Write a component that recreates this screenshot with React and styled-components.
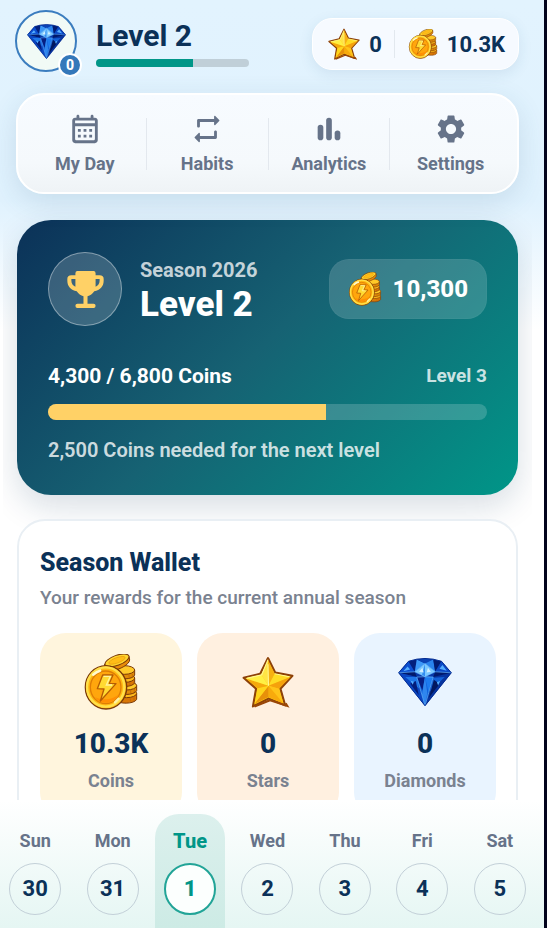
import React from "react";
import styled, { createGlobalStyle, css } from "styled-components";
import { MdSettings } from "react-icons/md";

const navy = "#0b3158";
const teal = "#009688";
const slate = "#667389";
const gray = "#7a8290";

const GlobalStyle = createGlobalStyle`
  * { box-sizing: border-box; }
  body { margin: 0; font-family: Roboto, "Open Sans", sans-serif; color: ${navy}; }
  button { font: inherit; color: inherit; background: none; border: 0; padding: 0; cursor: pointer; }
  h1, h2, p { margin: 0; }
  svg { display: block; flex: none; }
`;

const Page = styled.div`
  height: 100vh;
  display: flex;
  flex-direction: column;
  overflow: hidden;
  border-right: 3px solid #02031c;
  background: linear-gradient(#e2f3fe 0, #e0f2fe 200px, #ffffff 330px);
`;

const TopBar = styled.header`
  display: flex;
  align-items: flex-start;
  justify-content: space-between;
  padding: 10px 25px 0 15px;
  height: 78px;
  flex: none;
`;

const Profile = styled.div`
  display: flex;
  align-items: center;
  gap: 19px;
`;

const Avatar = styled.button`
  position: relative;
  width: 62px;
  height: 62px;
  border: 2px solid #3b7dbf;
  border-radius: 50%;
  background: #f1faf6;
  display: grid;
  place-items: center;
`;

const AvatarBadge = styled.span`
  position: absolute;
  right: -7px;
  bottom: -7px;
  width: 24px;
  height: 24px;
  border-radius: 50%;
  border: 2px solid #fff;
  background: #3478ba;
  color: #fff;
  font-size: 14px;
  font-weight: 800;
  line-height: 20px;
  text-align: center;
`;

const LevelBlock = styled.div`
  width: 153px;
  display: grid;
  gap: 5px;
  padding-top: 3px;
`;

const LevelTitle = styled.h1`
  font-size: 30px;
  line-height: 36px;
  font-weight: 700;
`;

const Track = styled.div`
  height: ${(p) => p.$height}px;
  border-radius: 8px;
  background: ${(p) => p.$color};
  overflow: hidden;
`;

const Fill = styled.div`
  height: 100%;
  background: ${(p) => p.$color};
`;

const Balance = styled.div`
  display: flex;
  align-items: center;
  height: 52px;
  margin-top: 8px;
  padding: 0 13px 0 15px;
  border-radius: 20px;
  border: 1px solid #fff;
  background: #f6faff;
  box-shadow: 0 4px 14px rgba(40, 90, 130, 0.1);
  font-size: 22px;
  font-weight: 700;
  gap: 9px;
`;

const BalanceDivider = styled.span`
  width: 1px;
  height: 28px;
  background: #e2e8ee;
  margin: 0 4px 0 3px;
`;

const NavBar = styled.nav`
  position: relative;
  flex: none;
  margin: 15px 25px 0 16px;
  height: 101px;
  padding: 0 6px;
  display: grid;
  grid-template-columns: repeat(4, 1fr);
  align-items: center;
  border: 2px solid #fff;
  border-radius: 28px;
  background: linear-gradient(#f7fbff, #f5f9fc 70%, #eff3f6);
  box-shadow: 0 8px 28px rgba(40, 90, 120, 0.14);
`;

const NavItem = styled.button`
  height: 52px;
  display: flex;
  flex-direction: column;
  align-items: center;
  justify-content: center;
  gap: 6px;
  color: ${slate};
  font-size: 18px;
  line-height: 24px;
  font-weight: 700;
  & + & { border-left: 1px solid #e3e8ee; }
`;

const Scroller = styled.main`
  flex: 1;
  min-height: 0;
  margin: 0 12px 0 3px;
  padding: 26px 14px 0;
  overflow: hidden;
  display: flex;
  flex-direction: column;
  gap: 24px;
`;

const Hero = styled.section`
  flex: none;
  border-radius: 34px;
  padding: 31px;
  height: 275px;
  color: #fff;
  background: linear-gradient(135deg, #0b3158, #166273 48%, #009688);
  box-shadow: 0 12px 32px rgba(11, 49, 88, 0.16);
`;

const HeroTop = styled.div`
  display: flex;
  align-items: center;
  gap: 18px;
`;

const TrophyDisc = styled.div`
  width: 74px;
  height: 74px;
  flex: none;
  border-radius: 50%;
  border: 1px solid rgba(255, 255, 255, 0.38);
  background: rgba(255, 255, 255, 0.18);
  color: #ffd166;
  display: grid;
  place-items: center;
`;

const HeroNames = styled.div`
  flex: 1;
  padding-top: 6px;
`;

const SeasonName = styled.p`
  font-size: 20px;
  line-height: 26px;
  font-weight: 700;
  color: rgba(255, 255, 255, 0.76);
`;

const HeroLevel = styled.h2`
  font-size: 35px;
  line-height: 44px;
  font-weight: 800;
`;

const HeroCoins = styled.div`
  display: flex;
  align-items: center;
  gap: 11px;
  height: 60px;
  padding: 0 18px;
  border: 1px solid rgba(255, 255, 255, 0.03);
  border-radius: 20px;
  background: rgba(255, 255, 255, 0.16);
  font-size: 24px;
  font-weight: 800;
`;

const ProgressLabels = styled.div`
  display: flex;
  justify-content: space-between;
  align-items: center;
  margin: 36px 0 15px;
  font-size: 21px;
  line-height: 26px;
  font-weight: 700;
`;

const NextLevel = styled.span`
  font-size: 19px;
  font-weight: 700;
  color: rgba(255, 255, 255, 0.8);
`;

const HeroNote = styled.p`
  margin-top: 17px;
  font-size: 20px;
  line-height: 26px;
  font-weight: 600;
  color: rgba(255, 255, 255, 0.8);
`;

const WalletCard = styled.section`
  flex: none;
  padding: 27px 20px 22px 21px;
  border: 2px solid #e9eff4;
  border-radius: 28px;
  background: #fff;
`;

const WalletTitle = styled.h2`
  font-size: 25px;
  line-height: 30px;
  font-weight: 800;
`;

const WalletText = styled.p`
  margin: 7px 0 22px;
  font-size: 19px;
  line-height: 26px;
  font-weight: 500;
  color: ${gray};
`;

const Tiles = styled.div`
  display: grid;
  grid-template-columns: repeat(3, 1fr);
  gap: 15px;
`;

const Tile = styled.div`
  display: flex;
  flex-direction: column;
  align-items: center;
  border-radius: 26px;
  padding: 20px 0 24px;
  background: ${(p) => p.$color};
`;

const TileIcon = styled.div`
  height: 58px;
  display: grid;
  place-items: center;
`;

const TileValue = styled.strong`
  margin-top: 16px;
  font-size: 28px;
  line-height: 34px;
  font-weight: 800;
`;

const TileLabel = styled.span`
  margin-top: 7px;
  font-size: 18px;
  line-height: 26px;
  font-weight: 700;
  color: ${gray};
`;

const WeekBar = styled.nav`
  flex: none;
  height: 128px;
  padding: 14px 9px 0 0;
  display: grid;
  grid-template-columns: repeat(7, 1fr);
  gap: 7px;
  background: linear-gradient(#ffffff, #e5f6f3);
`;

const DayNumber = styled.span`
  width: 52px;
  height: 52px;
  border-radius: 50%;
  border: 1px solid #c3d0d8;
  display: grid;
  place-items: center;
  color: ${navy};
  font-size: 22px;
  font-weight: 700;
`;

const Day = styled.button`
  display: flex;
  flex-direction: column;
  align-items: center;
  gap: 9px;
  padding-top: 14px;
  color: ${slate};
  font-size: 18px;
  line-height: 26px;
  font-weight: 700;
  border-radius: 24px 24px 0 0;
  ${(p) => p.$active && css`
    background: linear-gradient(#dcf0ed, #cdebe5);
    color: ${teal};
    font-size: 20px;
    font-weight: 800;
    ${DayNumber} {
      background: #fcfffe;
      border: 2px solid #22a497;
      color: ${teal};
      font-weight: 800;
    }
  `}
`;

function CalendarIcon() {
  return (
    <svg width="34" height="34" viewBox="0 0 24 24" fill="currentColor" aria-hidden="true">
      <path fillRule="evenodd" d="M19 4h-1V3c0-.55-.45-1-1-1s-1 .45-1 1v1H8V3c0-.55-.45-1-1-1s-1 .45-1 1v1H5c-1.1 0-2 .9-2 2v14c0 1.1.9 2 2 2h14c1.1 0 2-.9 2-2V6c0-1.1-.9-2-2-2zm0 15c0 .55-.45 1-1 1H6c-.55 0-1-.45-1-1v-9h14v9zm0-11H5V6h14v2z" />
      <path d="M7 12h2v2H7zM11 12h2v2h-2zM15 12h2v2h-2zM7 16h2v2H7zM11 16h2v2h-2zM15 16h2v2h-2z" />
    </svg>
  );
}

function RepeatIcon() {
  return (
    <svg width="34" height="34" viewBox="0 0 24 24" fill="currentColor" aria-hidden="true">
      <path d="M7 7h10v1.79c0 .45.54.67.85.35l2.79-2.79c.2-.2.2-.51 0-.71l-2.79-2.79c-.31-.31-.85-.09-.85.36V5H6c-.55 0-1 .45-1 1v4c0 .55.45 1 1 1s1-.45 1-1V7zm10 10H7v-1.79c0-.45-.54-.67-.85-.35l-2.79 2.79c-.2.2-.2.51 0 .71l2.79 2.79c.31.31.85.09.85-.36V19h11c.55 0 1-.45 1-1v-4c0-.55-.45-1-1-1s-1 .45-1 1v3z" />
    </svg>
  );
}

function BarsIcon() {
  return (
    <svg width="34" height="34" viewBox="0 0 24 24" fill="currentColor" aria-hidden="true">
      <rect x="4" y="9" width="4" height="11" rx="2" />
      <rect x="10" y="4" width="4" height="16" rx="2" />
      <rect x="16" y="13" width="4" height="7" rx="2" />
    </svg>
  );
}

function TrophyIcon() {
  return (
    <svg width="37" height="37" viewBox="-1 0 110 110" fill="currentColor" aria-hidden="true">
      <path d="M30 0h48q6 0 6 7v6h12q12 0 12 11v5c0 17-11 28-28 31-5 8-12 13-20 15v22h18q6 0 6 6.500t-6 6.500H30q-6 0-6-6.500t6-6.500h18V75c-8-2-15-7-20-15C11 57 0 46 0 29v-5q0-11 12-11h12V7q0-7 6-7zM24 24H12v5c0 9 5 15 12 18zM84 24v23c7-3 12-9 12-18v-5z" />
    </svg>
  );
}

function CoinsArt({ size }) {
  return (
    <svg width={size} height={size} viewBox="-6 -1 168 168" aria-hidden="true">
      <g stroke="#7a3a08" strokeWidth="3">
        <path d="M92 122v15c8 13 56 13 63-2v-17z" fill="#d97706" />
        <ellipse cx="124" cy="117" rx="31" ry="13" fill="#ffb91a" />
        <path d="M92 97v14c8 13 56 13 63-2V94z" fill="#e08a08" />
        <ellipse cx="124" cy="94" rx="31" ry="13" fill="#ffc928" />
        <path d="M88 73v14c8 13 56 13 61-2V71z" fill="#d97706" />
        <ellipse cx="119" cy="71" rx="30" ry="13" fill="#ffb91a" />
        <path d="M88 50v14c8 13 56 13 61-2V47z" fill="#e08a08" />
        <ellipse cx="118" cy="47" rx="31" ry="13" fill="#ffc928" />
        <path d="M59 29c-2 12 4 22 24 19 22-2 50-18 51-31l-2-11z" fill="#e88c08" />
        <ellipse cx="96" cy="18" rx="38" ry="15" transform="rotate(-20 96 18)" fill="#ffd52e" />
      </g>
      <ellipse cx="96" cy="18" rx="26" ry="8" transform="rotate(-20 96 18)" fill="#ffbd17" stroke="#e89a0c" strokeWidth="2" />
      <g stroke="#b96306" strokeWidth="2">
        <path d="M132 61v9M142 59v9M135 85v9M146 82v9M137 107v9M148 104v9M136 132v9M147 129v9" />
      </g>
      <ellipse cx="63" cy="99" rx="62" ry="65" fill="#ffb812" stroke="#7a3a08" strokeWidth="4" />
      <ellipse cx="62" cy="98" rx="56" ry="59" fill="none" stroke="#ffe04a" strokeWidth="7" />
      <ellipse cx="62" cy="99" rx="46" ry="49" fill="#ffa60d" stroke="#df7d05" strokeWidth="4" />
      <path d="M29 128a44 47 0 0 0 74-10c-12 14-48 24-74 10z" fill="#ff8f05" />
      <path d="M53 62h31L73 87l20 1-47 52 11-36-20-1z" fill="#ffda32" stroke="#b65c04" strokeWidth="4" strokeLinejoin="round" />
      <path d="M56 66h20l-12 26h17" fill="none" stroke="#fff29b" strokeWidth="4" />
      <path d="M25 61a45 45 0 0 1 20-12" stroke="#fffbd0" strokeWidth="8" strokeLinecap="round" fill="none" />
      <path d="M90 144l11-11" stroke="#fff1a3" strokeWidth="7" strokeLinecap="round" />
    </svg>
  );
}

function StarArt({ size }) {
  return (
    <svg width={size} height={size} viewBox="0 0 100 100" aria-hidden="true">
      <path d="M50 4l14 28 33 6-23 25 9 32-32-13-30 15 6-34L3 42l32-8z" fill="#ffc813" stroke="#8d4108" strokeWidth="4" strokeLinejoin="round" />
      <path d="M50 7L37 36l14 21z" fill="#ffe445" />
      <path d="M50 7l13 27-12 23z" fill="#f7b013" />
      <path d="M63 34l31 6-43 17z" fill="#ffdb24" />
      <path d="M94 40L71 63 51 57z" fill="#f5a10c" />
      <path d="M71 63l9 29-29-35z" fill="#ffc318" />
      <path d="M80 92L51 79V57z" fill="#f8aa0c" />
      <path d="M51 79L24 92l27-35z" fill="#e8900a" />
      <path d="M24 92l6-30 21-5z" fill="#ffd51c" />
      <path d="M30 62L7 43l44 14z" fill="#f5a80c" />
      <path d="M7 43l30-7 14 21z" fill="#fff044" />
      <path d="M50 7L38 36 9 43M63 34l28 6M51 57L50 16" fill="none" stroke="#fff792" strokeWidth="2" />
      <path d="M84 91l3 5-33-11-30 12" fill="none" stroke="#9a4708" strokeWidth="4" />
    </svg>
  );
}

function DiamondArt({ size }) {
  return (
    <svg width={size} height={size} viewBox="-2 -10 164 164" aria-hidden="true">
      <path d="M0 44L30 9Q80-8 130 9l30 35-80 100z" fill="#0638a8" />
      <path d="M30 9l19 32L0 44z" fill="#0b4ed0" />
      <path d="M30 9l25-5-6 37z" fill="#03207c" />
      <path d="M55 4l25 12-31 25z" fill="#3c98f7" />
      <path d="M55 4q25-5 50 0L80 16z" fill="#0b43b5" />
      <path d="M105 4L80 16l31 25z" fill="#2a83ed" />
      <path d="M80 16L49 41l31 15 31-15z" fill="#7cc9ff" />
      <path d="M80 16l-9 34 9 6z" fill="#318cf0" />
      <path d="M105 4l25 5-19 32z" fill="#021b70" />
      <path d="M130 9l30 35-49-3z" fill="#0b49c5" />
      <path d="M0 44l49-3 6 16z" fill="#021a6b" />
      <path d="M0 44l55 13 25 87z" fill="#0a46c2" />
      <path d="M20 57l35 0 7 35z" fill="#1e77e9" />
      <path d="M35 77l17-8 9 43z" fill="#031d7b" />
      <path d="M55 57h50l-25 87z" fill="#1261da" />
      <path d="M55 57l25-1-8 42z" fill="#061f83" />
      <path d="M80 56l25 1-14 47z" fill="#1d7cf0" />
      <path d="M80 56l-9 54 9 30 7-34z" fill="#2f86ee" />
      <path d="M160 44l-55 13-25 87z" fill="#07349f" />
      <path d="M140 57l-35 2-10 42z" fill="#1262d8" />
      <path d="M124 78l-17-13-15 55z" fill="#02185f" />
      <path d="M160 44l-49-3-6 16z" fill="#021a6b" />
      <path d="M49 41l31-25 31 25M0 44l49-3 31 15 31-15 49 3M55 57l25 87 25-87M55 57l25-1 25 1" fill="none" stroke="#6cbcff" strokeWidth="2" />
      <path d="M14 39l13-14 8 9zM124 32l9-12 13 18zM36 68l10 3-3 9zM116 73l10-4-6 14z" fill="#54adff" />
      <path d="M72 29l-10 12 14 2zM89 29l9 12-13 2z" fill="#d2efff" />
      <path d="M0 44L30 9Q80-8 130 9l30 35-80 100z" fill="none" stroke="#052c91" strokeWidth="3" />
    </svg>
  );
}

const navItems = [
  ["My Day", <CalendarIcon />],
  ["Habits", <RepeatIcon />],
  ["Analytics", <BarsIcon />],
  ["Settings", <MdSettings size={34} />],
];

const rewards = [
  { label: "Coins", value: "10.3K", color: "#fff5dd", art: <CoinsArt size={56} /> },
  { label: "Stars", value: "0", color: "#fff0e0", art: <StarArt size={52} /> },
  { label: "Diamonds", value: "0", color: "#e9f4ff", art: <DiamondArt size={54} /> },
];

const days = [
  ["Sun", 30],
  ["Mon", 31],
  ["Tue", 1],
  ["Wed", 2],
  ["Thu", 3],
  ["Fri", 4],
  ["Sat", 5],
];

const progress = (4300 / 6800) * 100;

export default function App() {
  return (
    <>
      <GlobalStyle />
      <Page>
        <TopBar>
          <Profile>
            <Avatar aria-label="Profile, 0 diamonds">
              <DiamondArt size={39} />
              <AvatarBadge>0</AvatarBadge>
            </Avatar>
            <LevelBlock>
              <LevelTitle>Level 2</LevelTitle>
              <Track $height={8} $color="#c0cfd8">
                <Fill $color={teal} style={{ width: `${progress}%` }} />
              </Track>
            </LevelBlock>
          </Profile>
          <Balance>
            <StarArt size={32} />
            <span>0</span>
            <BalanceDivider />
            <CoinsArt size={30} />
            <span>10.3K</span>
          </Balance>
        </TopBar>
        <NavBar>
          {navItems.map(([label, icon]) => (
            <NavItem key={label}>
              {icon}
              {label}
            </NavItem>
          ))}
        </NavBar>
        <Scroller>
          <Hero>
            <HeroTop>
              <TrophyDisc>
                <TrophyIcon />
              </TrophyDisc>
              <HeroNames>
                <SeasonName>Season 2026</SeasonName>
                <HeroLevel>Level 2</HeroLevel>
              </HeroNames>
              <HeroCoins>
                <CoinsArt size={34} />
                <span>10,300</span>
              </HeroCoins>
            </HeroTop>
            <ProgressLabels>
              <span>4,300 / 6,800 Coins</span>
              <NextLevel>Level 3</NextLevel>
            </ProgressLabels>
            <Track $height={16} $color="rgba(255, 255, 255, 0.18)">
              <Fill $color="#ffd166" style={{ width: `${progress}%` }} />
            </Track>
            <HeroNote>2,500 Coins needed for the next level</HeroNote>
          </Hero>
          <WalletCard>
            <WalletTitle>Season Wallet</WalletTitle>
            <WalletText>Your rewards for the current annual season</WalletText>
            <Tiles>
              {rewards.map((r) => (
                <Tile key={r.label} $color={r.color}>
                  <TileIcon>{r.art}</TileIcon>
                  <TileValue>{r.value}</TileValue>
                  <TileLabel>{r.label}</TileLabel>
                </Tile>
              ))}
            </Tiles>
          </WalletCard>
        </Scroller>
        <WeekBar>
          {days.map(([name, number]) => (
            <Day key={name} $active={name === "Tue"}>
              {name}
              <DayNumber>{number}</DayNumber>
            </Day>
          ))}
        </WeekBar>
      </Page>
    </>
  );
}
